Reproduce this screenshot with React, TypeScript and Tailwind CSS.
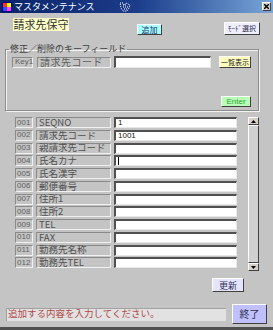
import React from "react";

const rows = [
  { no: "001", label: "SEQNO", value: "1", caret: false },
  { no: "002", label: "請求先コード", value: "1001", caret: false },
  { no: "003", label: "親請求先コード", value: "", caret: false },
  { no: "004", label: "氏名カナ", value: "", caret: true },
  { no: "005", label: "氏名漢字", value: "", caret: false },
  { no: "006", label: "郵便番号", value: "", caret: false },
  { no: "007", label: "住所1", value: "", caret: false },
  { no: "008", label: "住所2", value: "", caret: false },
  { no: "009", label: "TEL", value: "", caret: false },
  { no: "010", label: "FAX", value: "", caret: false },
  { no: "011", label: "勤務先名称", value: "", caret: false },
  { no: "012", label: "勤務先TEL", value: "", caret: false },
];

const jp = "font-['Noto_Sans_CJK_JP','Noto_Sans',sans-serif]";

const Sunken = "border border-t-[#8a8a8a] border-l-[#8a8a8a] border-b-[#f0f0f0] border-r-[#f0f0f0]";
const Input =
  "bg-white border-t-2 border-l-2 border-b border-r border-t-[#505050] border-l-[#505050] border-b-[#e8e8e8] border-r-[#e8e8e8]";
const Raised =
  "border border-t-white border-l-white border-b-[#404040] border-r-[#404040]";

function TitleBar() {
  return (
    <div className="flex h-[13px] items-center bg-gradient-to-r from-[#0a246a] via-[#1c3c8a] to-[#7aa6d8] pl-[2px] pr-[2px]">
      <svg width="10" height="10" viewBox="0 0 10 10">
        <rect x="0" y="0" width="10" height="10" fill="#000080" />
        <rect x="1" y="1" width="4" height="4" fill="#ff3030" />
        <rect x="5" y="1" width="4" height="4" fill="#ffff00" />
        <rect x="1" y="5" width="4" height="4" fill="#3050ff" />
        <rect x="5" y="5" width="4" height="4" fill="#ff40ff" />
      </svg>
      <span className={`${jp} ml-[2px] whitespace-nowrap text-[9px] leading-none text-white`}>マスタメンテナンス</span>
      <svg className="ml-[24px]" width="12" height="10" viewBox="0 0 12 10">
        <path d="M1 1 L4 1 L5 3 L7 1 L11 3 L10 6 L8 9 L4 9 L2 6 Z" fill="none" stroke="#ffffff" strokeWidth="1" strokeDasharray="1 1" />
        <path d="M4 3 L8 3 M4 5 L9 5 M5 7 L8 7" stroke="#ffffff" strokeWidth="1" strokeDasharray="1 1" />
      </svg>
      <div className={`ml-auto flex h-[9px] w-[9px] items-center justify-center bg-[#d4d0c8] ${Raised}`}>
        <svg width="5" height="5" viewBox="0 0 5 5">
          <path d="M0 0 L5 5 M5 0 L0 5" stroke="#000" strokeWidth="1.4" />
        </svg>
      </div>
    </div>
  );
}

export default function App() {
  return (
    <div className={`${jp} flex h-[330px] w-[273px] flex-col overflow-hidden bg-[#c4c4c4]`}>
      <TitleBar />
      <div className="flex flex-1 flex-col border-b-[3px] border-b-[#505050]">
        {/* header */}
        <div className="flex h-[31px] items-start">
          <div className="ml-[13px] mt-[5px] flex h-[13px] w-[56px] items-center justify-center whitespace-nowrap bg-[#ffffc8] text-[11px] leading-none text-[#303030]">
            請求先保守
          </div>
          <button className={`ml-[68px] mt-[11px] flex h-[11px] w-[25px] items-center justify-center whitespace-nowrap bg-[#a8ffff] text-[8px] leading-none text-[#203070] ${Raised}`}>
            追加
          </button>
          <button className={`ml-[62px] mt-[9px] flex h-[13px] w-[36px] items-center justify-center whitespace-nowrap bg-[#eeeefc] text-[7px] leading-none text-[#303050] ${Raised}`}>
            ﾓｰﾄﾞ選択
          </button>
        </div>

        {/* key group */}
        <fieldset className="ml-[5px] h-[67px] w-[254px] border border-[#8c8c8c] px-0 pb-0 pt-0 shadow-[inset_1px_1px_0_#f4f4f4,1px_1px_0_#f4f4f4]">
          <legend className="ml-[3px] whitespace-nowrap px-[1px] text-[9px] leading-[10px] text-[#404040]">
            修正／削除のキーフィールド
          </legend>
          <div className="mt-[2px] flex items-center">
            <div className={`ml-[6px] flex h-[11px] w-[21px] items-center pl-[2px] font-['Liberation_Sans',sans-serif] text-[8px] leading-none text-[#606060] ${Sunken}`}>
              Key1
            </div>
            <div className={`ml-[4px] flex h-[11px] w-[74px] items-center whitespace-nowrap pl-[2px] text-[10px] tracking-[0.5px] leading-none text-[#606060] ${Sunken}`}>
              請求先コード
            </div>
            <div className={`ml-[3px] h-[12px] w-[97px] ${Input}`} />
            <button className={`ml-[8px] flex h-[12px] w-[32px] items-center justify-center whitespace-nowrap bg-[#ffffc0] text-[7px] leading-none text-[#202020] ${Raised}`}>
              一覧表示
            </button>
          </div>
          <div className="flex justify-end">
            <button className={`mr-[7px] mt-[28px] flex h-[11px] w-[30px] items-center justify-center bg-[#b8ffb8] font-['Liberation_Sans',sans-serif] text-[8px] leading-none text-[#30a030] ${Raised}`}>
              Enter
            </button>
          </div>
        </fieldset>

        {/* rows */}
        <div className="mt-[6px] flex">
          <div className="ml-[15px] flex flex-col gap-[1.75px]">
            {rows.map((r) => (
              <div key={r.no} className="flex h-[11px] items-center">
                <div className={`flex h-[11px] w-[18px] items-center pl-[1px] font-['Liberation_Sans',sans-serif] text-[8px] leading-none text-[#606060] ${Sunken}`}>
                  {r.no}
                </div>
                <div className={`ml-[3px] flex h-[11px] w-[75px] items-center whitespace-nowrap pl-[2px] text-[9.5px] leading-none text-[#505050] ${Sunken}`}>
                  {r.label}
                </div>
                <div className={`ml-[3px] flex h-[11px] w-[123px] items-center pl-[2px] font-['Liberation_Sans',sans-serif] text-[8px] leading-none text-[#202020] ${Input}`}>
                  {r.value}
                  {r.caret && <span className="h-[8px] w-px bg-black" />}
                </div>
              </div>
            ))}
          </div>
          {/* scrollbar */}
          <div className="ml-[11px] flex h-[154px] w-[11px] flex-col bg-[#e0e0e0]">
            <div className={`flex h-[8px] items-center justify-center bg-[#d4d0c8] ${Raised}`}>
              <svg width="5" height="3" viewBox="0 0 5 3"><path d="M2.5 0 L5 3 L0 3 Z" fill="#000" /></svg>
            </div>
            <div className={`flex-1 bg-[#d0d0d0] ${Raised}`} />
            <div className={`flex h-[8px] items-center justify-center bg-[#d4d0c8] ${Raised}`}>
              <svg width="5" height="3" viewBox="0 0 5 3"><path d="M0 0 L5 0 L2.5 3 Z" fill="#000" /></svg>
            </div>
          </div>
        </div>

        {/* update */}
        <div className="mt-[7px] flex">
          <button className={`ml-[212px] flex h-[14px] w-[32px] items-center justify-center whitespace-nowrap bg-[#e4e4ff] text-[9px] leading-none text-[#303050] ${Raised}`}>
            更新
          </button>
        </div>

        {/* status */}
        <div className="mt-[12px] flex items-center">
          <div className="ml-[6px] flex h-[13px] w-[220px] items-center whitespace-nowrap bg-[#e2e2e2] pl-[2px] text-[9.5px] leading-none text-[#b04848] shadow-[inset_1px_1px_0_#a0a0a0]">
            追加する内容を入力してください。
          </div>
          <button className={`ml-[6px] flex h-[20px] w-[35px] items-center justify-center whitespace-nowrap bg-[#c0c0ff] text-[10px] leading-none text-[#303050] ${Raised}`}>
            終了
          </button>
        </div>
      </div>
    </div>
  );
}
